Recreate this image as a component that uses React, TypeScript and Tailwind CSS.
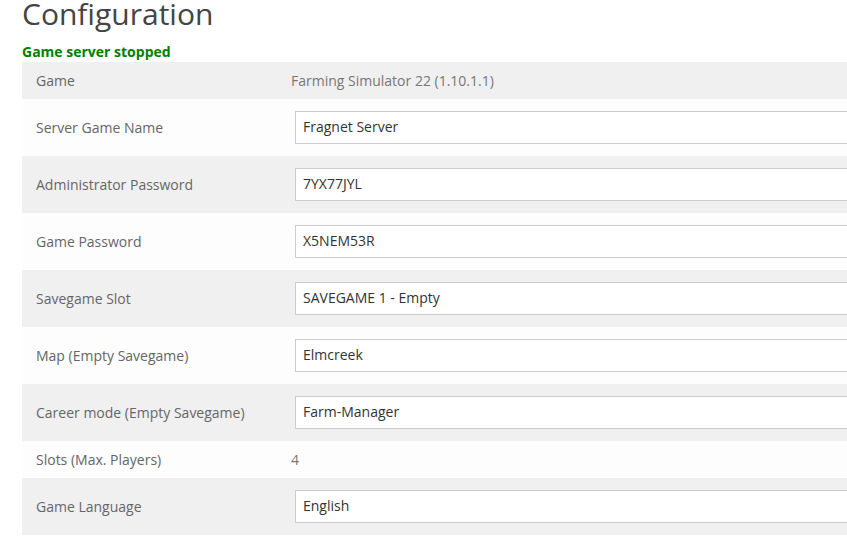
const rows: { label: string; value: string; input: boolean }[] = [
  { label: "Game", value: "Farming Simulator 22 (1.10.1.1)", input: false },
  { label: "Server Game Name", value: "Fragnet Server", input: true },
  { label: "Administrator Password", value: "7YX77JYL", input: true },
  { label: "Game Password", value: "X5NEM53R", input: true },
  { label: "Savegame Slot", value: "SAVEGAME 1 - Empty", input: true },
  { label: "Map (Empty Savegame)", value: "Elmcreek", input: true },
  { label: "Career mode (Empty Savegame)", value: "Farm-Manager", input: true },
  { label: "Slots (Max. Players)", value: "4", input: false },
  { label: "Game Language", value: "English", input: true },
];

const App = () => {
  return (
    <div className="h-[537px] w-[847px] overflow-hidden bg-white font-['Open_Sans',sans-serif]">
      <div className="pl-[22px]">
        <h1 className="-mt-[3px] text-[30px] leading-[33px] font-normal text-[#444]">
          Configuration
        </h1>
        <p className="mt-[12px] text-[14px] leading-[20px] font-bold text-[#008000]">
          Game server stopped
        </p>
        <div className="w-[900px]">
          {rows.map((row, i) => (
            <div
              key={row.label}
              className={`flex items-center ${
                row.input ? "h-[57px]" : "h-[37px] pt-px"
              } ${i % 2 === 0 ? "bg-[#f0f0f0]" : "bg-[#fdfdfd]"}`}
            >
              <div className="w-[269px] pl-[14px] text-[14px] leading-[20px] text-[#666]">
                {row.label}
              </div>
              {row.input ? (
                <div className="ml-[4px] flex h-[33px] flex-1 items-center border border-[#ccc] bg-white pb-px pl-[7px] text-[14px] leading-[20px] text-[#333]">
                  {row.value}
                </div>
              ) : (
                <div className="text-[14px] leading-[20px] text-[#777]">
                  {row.value}
                </div>
              )}
            </div>
          ))}
        </div>
      </div>
    </div>
  );
};

export default App;
